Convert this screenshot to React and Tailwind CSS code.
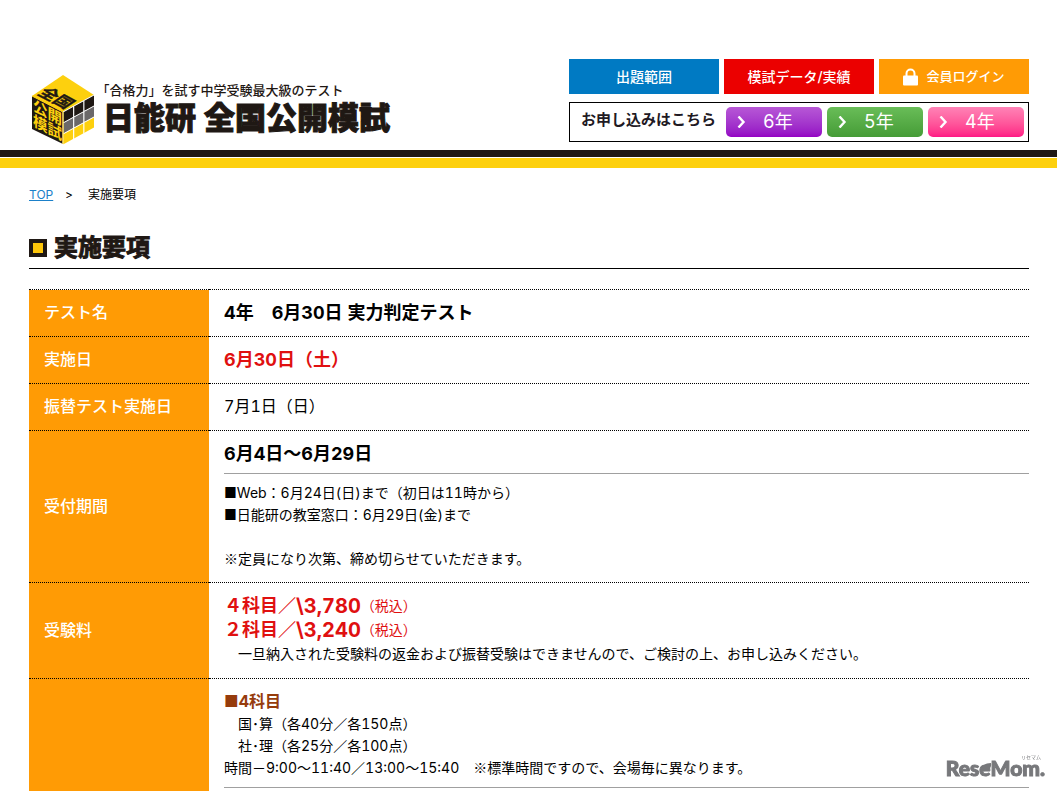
const grades = [
  { label: '6年', tone: 'from-[#b757d6] to-[#9400c4]' },
  { label: '5年', tone: 'from-[#69bd58] to-[#459c36]' },
  { label: '4年', tone: 'from-[#ff82b6] to-[#ff1685]' },
];

function CubeLogo() {
  return (
    <svg width="64" height="72" viewBox="31 73 64 72" aria-hidden="true" className="shrink-0">
      <path d="M63 75 94 95 63 112 32 96Z" fill="#fdd00e" />
      <path d="M32 96 63 112V144L32 129Z" fill="#1f1814" />
      <g transform="matrix(.969 -.531 0 1 63 112)">
        <rect width="32" height="11" fill="#1f1814" />
        <rect y="11" width="32" height="11" fill="#6b6869" />
        <rect y="22" width="32" height="10.500" fill="#fdd00e" />
        <path d="M0 0V33M11 0V33M21.500 0V33M0 11H32M0 22H32M0 0H32" stroke="#fff" strokeWidth="1.200" />
      </g>
      <path d="M32 96 63 112V144" fill="none" stroke="#fdd00e" strokeWidth="1" />
      <g className="font-['Noto_Sans_CJK_JP',sans-serif] font-bold" fontSize="15">
        <text transform="matrix(.969 .516 -.969 .656 63 75)" x="1" y="28" fill="#1f1814" stroke="#1f1814" strokeWidth=".4">全国</text>
        <g transform="matrix(.969 .5 0 1 32 96)" fill="#fdd00e">
          <text x="1" y="14">公開</text>
          <text x="1" y="29">模試</text>
        </g>
      </g>
    </svg>
  );
}

function Header() {
  return (
    <header>
      <div className="flex h-[150px] items-end justify-between pl-[29px] pr-7">
        <a href="#top" className="flex items-start gap-2 pb-[5px] pl-0.5 text-[#1f1814]">
          <CubeLogo />
          <span className="flex flex-col pt-2">
            <span className="text-[13px] leading-[18px] font-medium">
              <span className="[font-feature-settings:'halt']">「</span>
              合格力」を試す中学受験最大級のテスト
            </span>
            <span className="flex gap-2 text-[31px] leading-[38px] font-black whitespace-nowrap [-webkit-text-stroke:1px]">
              <span>日能研</span>
              <span>全国公開模試</span>
            </span>
          </span>
        </a>
        <div className="flex w-[460px] shrink-0 flex-col gap-2 pb-2">
          <nav className="grid h-[35px] grid-cols-3 gap-[5px] text-sm font-medium text-white">
            <a href="#range" className="flex items-center justify-center bg-[#007ac3]">出題範囲</a>
            <a href="#data" className="flex items-center justify-center bg-[#eb0000]">模試データ/実績</a>
            <a href="#login" className="flex items-center justify-center gap-2 bg-[#ff9b05] text-[13px]">
              <svg width="15" height="18" viewBox="0 0 15 18" aria-hidden="true">
                <path d="M3.500 8V5.500a4 4 0 0 1 8 0V8" fill="none" stroke="#fff" strokeWidth="2" />
                <rect y="7.500" width="15" height="10" rx="1" fill="#fff" />
              </svg>
              会員ログイン
            </a>
          </nav>
          <div className="flex h-10 items-center justify-between border border-black pl-[11px] pr-1">
            <span className="pb-1 text-[15px] leading-5 font-bold text-[#1f1a24]">お申し込みはこちら</span>
            <div className="flex gap-[5px]">
              {grades.map((g) => (
                <a
                  key={g.label}
                  href="#apply"
                  className={`flex h-[30px] w-24 items-center gap-[17px] rounded-[5px] bg-linear-to-b pl-[11px] text-lg leading-none text-white ${g.tone}`}
                >
                  <svg width="9" height="12" viewBox="0 0 9 12" fill="none" aria-hidden="true">
                    <path d="M1.500 .5 6.500 6 1.500 11.500" stroke="#fff" strokeWidth="2.400" />
                  </svg>
                  {g.label}
                </a>
              ))}
            </div>
          </div>
        </div>
      </div>
      <div className="h-[7px] bg-[#1f1814]" />
      <div className="mt-px h-2.5 bg-[#fdd00e]" />
    </header>
  );
}

function Row({ title, children }) {
  return (
    <tr className="border-t border-dotted border-black">
      <th scope="row" className="w-[180px] bg-[#ff9b05] px-[15px] pb-0.5 text-left align-middle text-base leading-6 font-medium text-white">
        {title}
      </th>
      <td className="pt-[11px] pb-3 pl-[15px] text-sm leading-[22px]">{children}</td>
    </tr>
  );
}

function Fee({ subjects, price }) {
  return (
    <p className="flex items-center text-lg leading-6 font-bold text-[#e01010]">
      {subjects}
      <span className="text-xl leading-6">{price}</span>
      <span className="text-sm leading-6 font-normal">（税込）</span>
    </p>
  );
}

function Mark() {
  return <span className="font-['Noto_Sans_CJK_JP',sans-serif] leading-none">※</span>;
}

function Watermark() {
  return (
    <div className="fixed right-3 bottom-4 flex flex-col items-end text-[#77787b]">
      <span className="pr-1 font-['Noto_Sans_CJK_JP',sans-serif] text-[5px] leading-none">リセマム</span>
      <span className="flex h-4 items-center font-['Lato',sans-serif] text-[21px] leading-none font-black [-webkit-text-stroke:1px]">
        Res
        <span className="relative">
          e
          <svg width="11" height="12" viewBox="0 0 11 12" className="absolute bottom-1 left-0.5" aria-hidden="true">
            <path d="M1 9C0 4 4 1 10 1c1 5-3 9-9 8Z" fill="currentColor" />
          </svg>
        </span>
        Mom.
      </span>
    </div>
  );
}

export default function App() {
  return (
    <div className="relative bg-white font-['Inter','Noto_Sans_CJK_JP',sans-serif] text-black tabular-nums" lang="ja">
      <Header />
      <main className="pl-[29px] pr-7">
        <nav className="flex pt-[18px] text-xs leading-[18px]">
          <a href="#top" className="text-[#1b80c9] underline">TOP</a>
          <span className="pl-3 pr-[15px]">&gt;</span>
          <span>実施要項</span>
        </nav>
        <h1 className="mt-[26px] flex items-center gap-[7px] border-b border-black pb-0.5 text-2xl leading-9 font-bold text-[#1f1814]">
          <span className="size-[18px] border-4 border-[#1f1814] bg-[#fdc60a]" />
          <span className="[-webkit-text-stroke:1px]">実施要項</span>
        </h1>
        <table className="mt-5 w-full border-collapse">
          <tbody>
            <Row title="テスト名">
              <p className="text-lg leading-[23px] font-bold">4年　6月30日 実力判定テスト</p>
            </Row>
            <Row title="実施日">
              <p className="text-lg leading-[23px] font-bold text-[#e01010]">6月30日（土）</p>
            </Row>
            <Row title="振替テスト実施日">
              <p className="text-base leading-[23px]">7月1日（日）</p>
            </Row>
            <Row title="受付期間">
              <p className="mb-2 border-b border-[#a0a0a0] pb-2 text-lg leading-[23px] font-bold">6月4日〜6月29日</p>
              <p>■Web：6月24日(日)まで（初日は11時から）</p>
              <p>■日能研の教室窓口：6月29日(金)まで</p>
              <p className="mt-[22px]"><Mark />定員になり次第、締め切らせていただきます。</p>
            </Row>
            <Row title="受験料">
              <Fee subjects="４科目／" price="\3,780" />
              <Fee subjects="２科目／" price="\3,240" />
              <p className="leading-6">　一旦納入された受験料の返金および振替受験はできませんので、ご検討の上、お申し込みください。</p>
            </Row>
            <Row title="">
              <p className="text-base leading-[23px] font-bold text-[#963c0c]">■4科目</p>
              <p>　国･算（各40分／各150点）</p>
              <p>　社･理（各25分／各100点）</p>
              <p className="border-b border-[#a0a0a0] pb-2">時間－9:00〜11:40／13:00〜15:40　<Mark />標準時間ですので、会場毎に異なります。</p>
            </Row>
          </tbody>
        </table>
      </main>
      <Watermark />
    </div>
  );
}
